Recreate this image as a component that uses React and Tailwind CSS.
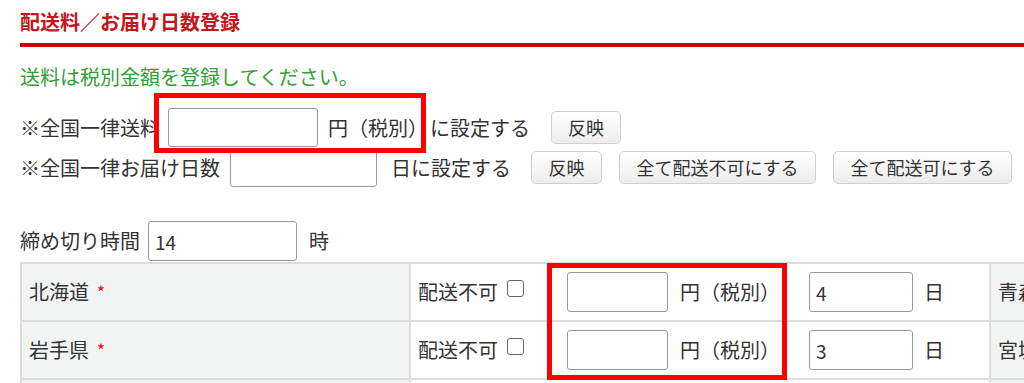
import React from 'react';

const font = "font-['Noto_Sans_CJK_JP',sans-serif]";

const TextBox = ({ w, h = 'h-[39px]', value = '', className = '' }) => (
  <input
    readOnly
    value={value}
    className={`${w} ${h} ${className} rounded-[3px] border border-[#999] bg-white px-[6px] text-[19px] text-[#333] outline-none`}
  />
);

const Btn = ({ children, w, className = '' }) => (
  <button
    className={`${w} ${className} h-[33px] rounded-[5px] border border-[#cfcfcf] bg-gradient-to-b from-white to-[#ececec] text-[18px] text-[#333]`}
  >
    {children}
  </button>
);

const Required = () => <span className="ml-[8px] text-[17px] text-[#f00]">*</span>;

const PrefRow = ({ name, days, next }) => (
  <div className="flex h-[58px] border-b-2 border-[#dcdcdc]">
    <div className="flex w-[387px] items-center bg-[#f2f3f3] pl-[7px]">
      {name}
      <Required />
    </div>
    <div className="flex w-[580px] items-center border-l-2 border-[#dcdcdc] bg-white pl-[7px]">
      <span>配送不可</span>
      <span className="ml-[9px] mb-[8px] inline-block h-[17px] w-[17px] rounded-[3px] border border-[#666] bg-white" />
      <TextBox w="w-[101px]" h="h-[40px]" className="ml-[43px]" />
      <span className="ml-[12px]">円（税別）</span>
      <TextBox w="w-[104px]" h="h-[40px]" value={days} className="ml-[29px]" />
      <span className="ml-[11px]">日</span>
    </div>
    <div className="flex flex-1 items-center border-l-2 border-[#dcdcdc] bg-[#f2f3f3] pl-[7px]">
      {next}
      <Required />
    </div>
  </div>
);

export default function App() {
  return (
    <div className={`${font} relative h-[383px] w-[1024px] overflow-hidden bg-white text-[20px] text-[#333]`}>
      <div className="pl-[20px]">
        <h1 className="pt-[10px] text-[20px] font-bold leading-[24px] text-[#c4161c]">配送料／お届け日数登録</h1>
        <div className="mt-[9px] h-[4px] bg-[#cc0000]" />
        <p className="mt-[18px] leading-[24px] text-[#33a033]">送料は税別金額を登録してください。</p>

        <div className="mt-[19px] flex h-[39px] items-center">
          <span>※全国一律送料</span>
          <TextBox w="w-[150px]" className="ml-[8px]" />
          <span className="ml-[10px]">円（税別）</span>
          <span className="ml-[2px]">に設定する</span>
          <Btn w="w-[70px]" className="ml-[21px]">反映</Btn>
        </div>

        <div className="mt-[1px] flex h-[39px] items-center">
          <span>※全国一律お届け日数</span>
          <TextBox w="w-[147px]" className="ml-[10px]" />
          <span className="ml-[14px]">日に設定する</span>
          <Btn w="w-[71px]" className="ml-[20px]">反映</Btn>
          <Btn w="w-[197px]" className="ml-[17px]">全て配送不可にする</Btn>
          <Btn w="w-[179px]" className="ml-[17px]">全て配送可にする</Btn>
        </div>

        <div className="mt-[34px] flex h-[40px] items-center">
          <span>締め切り時間</span>
          <TextBox w="w-[149px]" h="h-[40px]" value="14" className="ml-[8px]" />
          <span className="ml-[12px]">時</span>
        </div>

        <div className="mt-[1px] w-[1300px] border-l-2 border-t-2 border-[#dcdcdc]">
          <PrefRow name="北海道" days="4" next="青森県" />
          <PrefRow name="岩手県" days="3" next="宮城県" />
          <PrefRow name="秋田県" days="3" next="山形県" />
        </div>
      </div>

      <div className="absolute left-[154px] top-[93px] h-[60px] w-[272px] border-[5px] border-[#ff0000]" />
      <div className="absolute left-[547px] top-[263px] h-[117px] w-[240px] border-[5px] border-[#ff0000]" />
    </div>
  );
}
